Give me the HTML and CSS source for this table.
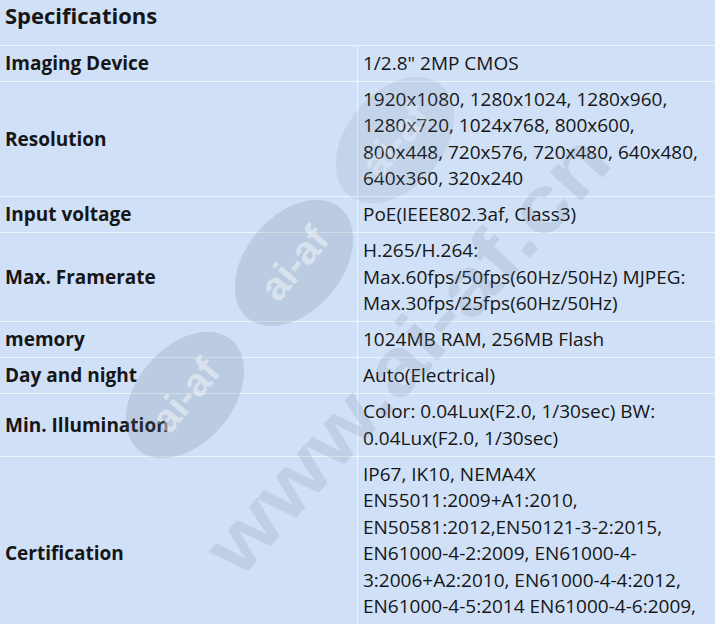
FILE: index.html
```html
<!DOCTYPE html>
<html lang="en">
<head>
  <meta charset="UTF-8" />
  <meta name="viewport" content="width=device-width, initial-scale=1.0" />
  <title>Specifications</title>
  <link rel="stylesheet" href="styles.css">
</head>
<body>
  <div class="spec-wrap">
    <table class="spec-table">
      <thead>
        <tr>
          <th colspan="2" class="spec-title">Specifications</th>
        </tr>
      </thead>
      <tbody>
        <tr>
          <td class="label">Imaging Device</td>
          <td class="value">1/2.8" 2MP CMOS</td>
        </tr>
        <tr>
          <td class="label">Resolution</td>
          <td class="value">1920x1080, 1280x1024, 1280x960, 1280x720, 1024x768, 800x600, 800x448, 720x576, 720x480, 640x480, 640x360, 320x240</td>
        </tr>
        <tr>
          <td class="label">Input voltage</td>
          <td class="value">PoE(IEEE802.3af, Class3)</td>
        </tr>
        <tr>
          <td class="label">Max. Framerate</td>
          <td class="value">H.265/H.264: Max.60fps/50fps(60Hz/50Hz) MJPEG: Max.30fps/25fps(60Hz/50Hz)</td>
        </tr>
        <tr>
          <td class="label">memory</td>
          <td class="value">1024MB RAM, 256MB Flash</td>
        </tr>
        <tr>
          <td class="label">Day and night</td>
          <td class="value">Auto(Electrical)</td>
        </tr>
        <tr>
          <td class="label">Min. Illumination</td>
          <td class="value">Color: 0.04Lux(F2.0, 1/30sec) BW: 0.04Lux(F2.0, 1/30sec)</td>
        </tr>
        <tr>
          <td class="label">Certification</td>
          <td class="value">IP67, IK10, NEMA4X<br>EN55011:2009+A1:2010, EN50581:2012,EN50121-3-2:2015, EN61000-4-2:2009, EN61000-4-3:2006+A2:2010, EN61000-4-4:2012, EN61000-4-5:2014 EN61000-4-6:2009, EN61000-4-11:2004</td>
        </tr>
      </tbody>
    </table>

    <!-- site watermark laid over the table -->
    <svg class="watermark" width="715" height="624" viewBox="0 0 715 624">
      <g class="wm-badge wm-faint" transform="translate(395 140) rotate(-50)">
        <ellipse rx="72" ry="48" />
        <text y="14" text-anchor="middle">ai-af</text>
      </g>
      <g class="wm-badge" transform="translate(294 263) rotate(-50)">
        <ellipse rx="72" ry="48" />
        <text y="14" text-anchor="middle">ai-af</text>
      </g>
      <g class="wm-badge" transform="translate(185 395) rotate(-50)">
        <ellipse rx="72" ry="48" />
        <text y="14" text-anchor="middle">ai-af</text>
      </g>
      <text class="wm-site" transform="translate(240 580) rotate(-48)" textLength="560" lengthAdjust="spacingAndGlyphs">www.ai-af.cn</text>
    </svg>
  </div>
</body>
</html>
```

FILE: styles.css
```css
* {
  box-sizing: border-box;
  margin: 0;
  padding: 0;
}

body {
  background: #cfe0f7;
  color: #161616;
  font-family: 'Open Sans', 'Noto Sans', sans-serif;
  font-size: 19px;
  overflow: hidden;
}

.spec-wrap {
  position: relative;
  width: 715px;
}

.spec-table {
  width: 100%;
  border-collapse: collapse;
  table-layout: fixed;
}

.spec-title {
  text-align: left;
  font-size: 22px;
  font-weight: 700;
  height: 45px;
  padding: 0 5px 14px;
  border-bottom: 1px solid #eef4fc;
}

.spec-table td {
  padding: 4.25px 5px;
  line-height: 26.5px;
  border-bottom: 1px solid #eef4fc;
  vertical-align: middle;
}

.label {
  width: 358px;
  font-weight: 700;
  border-right: 1px solid #eef4fc;
}

.value {
  font-weight: 400;
}

.watermark {
  position: absolute;
  top: 0;
  left: 0;
  pointer-events: none;
}

.wm-badge ellipse {
  fill: rgba(110, 120, 140, 0.2);
}

.wm-badge text {
  fill: rgba(255, 255, 255, 0.45);
  font-family: 'Liberation Sans', sans-serif;
  font-weight: 700;
  font-size: 40px;
}

.wm-faint {
  opacity: 0.55;
}

.wm-site {
  fill: rgba(110, 120, 140, 0.16);
  font-family: 'Liberation Sans', sans-serif;
  font-weight: 700;
  font-size: 80px;
}
```
